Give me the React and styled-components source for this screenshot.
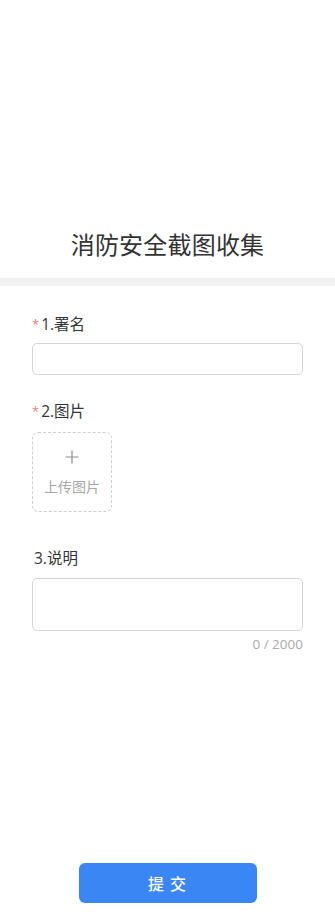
import React, { useState } from "react";
import styled, { createGlobalStyle } from "styled-components";

const GlobalStyle = createGlobalStyle`
  html, body {
    margin: 0;
    padding: 0;
    background: #fff;
  }
  body {
    font-family: "Open Sans", "Noto Sans CJK SC", sans-serif;
    color: #333;
  }
  * {
    box-sizing: border-box;
  }
`;

const App = () => {
  const [note, setNote] = useState("");

  return (
    <Page>
      <GlobalStyle />
      <Header>
        <Title>消防安全截图收集</Title>
      </Header>
      <Divider />
      <Form>
        <Field>
          <Label required>1.署名</Label>
          <Input type="text" />
        </Field>
        <Field gap={11} spacing={26}>
          <Label required>2.图片</Label>
          <Upload>
            <Plus viewBox="0 0 14 14">
              <path d="M7 0.5v13M0.5 7h13" />
            </Plus>
            <UploadText>上传图片</UploadText>
          </Upload>
        </Field>
        <Field gap={10} spacing={36}>
          <Label>3.说明</Label>
          <TextArea
            value={note}
            maxLength={2000}
            onChange={(e) => setNote(e.target.value)}
          />
          <Counter>{note.length} / 2000</Counter>
        </Field>
      </Form>
      <Footer>
        <SubmitButton>提 交</SubmitButton>
      </Footer>
    </Page>
  );
};

export default App;

const Page = styled.div`
  min-height: 100vh;
  display: flex;
  flex-direction: column;
`;

const Header = styled.div`
  padding: 228px 0 16px;
  text-align: center;
`;

const Title = styled.h1`
  margin: 0;
  font-size: 24px;
  line-height: 34px;
  font-weight: 400;
  color: #333;
  letter-spacing: 0.2px;
`;

const Divider = styled.div`
  height: 8px;
  background: #f2f2f2;
`;

const Form = styled.div`
  padding: 28px 32px 0;
  display: flex;
  flex-direction: column;
`;

const Field = styled.div`
  display: flex;
  flex-direction: column;
  gap: ${(props) => props.gap || 9}px;
  margin-top: ${(props) => props.spacing || 0}px;
`;

const Label = styled.div`
  font-size: 15.5px;
  line-height: 20px;
  color: #333;

  &::before {
    content: "${(props) => (props.required ? "*" : "")}";
    color: #f77c7c;
    font-size: 13px;
    margin-right: 2px;
    vertical-align: 1px;
  }
`;

const Input = styled.input`
  width: 100%;
  height: 32px;
  border: 1px solid #d4d4d4;
  border-radius: 5px;
  padding: 0 10px;
  font-size: 14px;
  outline: none;
  font-family: inherit;
`;

const Upload = styled.div`
  width: 80px;
  height: 80px;
  border: 1px dashed #cfcfcf;
  border-radius: 6px;
  display: flex;
  flex-direction: column;
  align-items: center;
  padding-top: 17px;
  gap: 13px;
`;

const Plus = styled.svg`
  width: 14px;
  height: 14px;
  fill: none;
  stroke: #8c8c8c;
  stroke-width: 1.2;
`;

const UploadText = styled.div`
  font-size: 14px;
  line-height: 20px;
  color: #a6a6a6;
`;

const TextArea = styled.textarea`
  width: 100%;
  height: 53px;
  border: 1px solid #d4d4d4;
  border-radius: 5px;
  padding: 6px 10px;
  font-size: 14px;
  font-family: inherit;
  resize: none;
  outline: none;
  display: block;
`;

const Counter = styled.div`
  margin-top: -5px;
  text-align: right;
  font-size: 13.5px;
  line-height: 16px;
  color: #aaa;
`;

const Footer = styled.div`
  margin-top: auto;
  padding-bottom: 16px;
  display: flex;
  justify-content: center;
`;

const SubmitButton = styled.button`
  width: 178px;
  height: 40px;
  border: none;
  border-radius: 6px;
  background: #3a86f4;
  color: #fff;
  font-size: 16px;
  font-weight: 500;
  font-family: inherit;
  letter-spacing: 1px;
  cursor: pointer;
`;
